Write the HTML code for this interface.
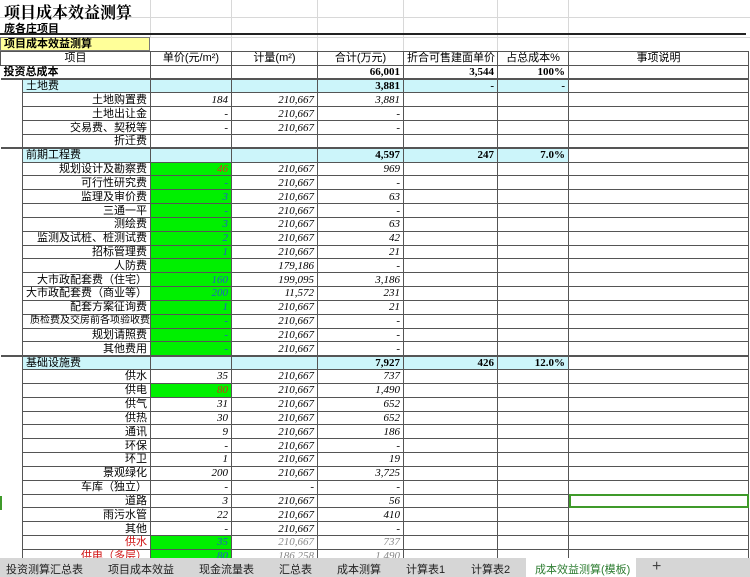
<!DOCTYPE html>
<html><head><meta charset="utf-8">
<style>
*{margin:0;padding:0;box-sizing:border-box}
body{width:750px;height:577px;overflow:hidden;background:#fff;position:relative;font-family:"Liberation Serif","Noto Serif CJK SC",serif;font-size:11px;color:#000}
.gl{position:absolute;background:#d8d8d8}
#t{position:absolute;left:0;top:51px;border-collapse:collapse;table-layout:fixed;width:748px}
#t td{height:13.83px;padding:0 3px;border:1px solid #555;white-space:nowrap;overflow:hidden;line-height:12px;font-size:11px}
#t td.a{border-top:none;border-bottom:none;border-left:none}
.l{text-align:right;font-family:"Liberation Sans","Noto Sans CJK SC",sans-serif}
.n{text-align:right;font-style:italic}
.c{text-align:center;font-family:"Liberation Sans","Noto Sans CJK SC",sans-serif}
.b{font-weight:bold;text-align:right}
.cy{background:#ccf5fa}
.g{background:#00f000;color:#2060c0;text-align:right;font-style:italic}
.sec td{border-top:2px solid #555!important}
.gr{color:#888}
.red{color:#d01010}
#tabs{position:absolute;left:0;top:558px;width:750px;height:19px;background:#d6d6d6;font-family:"Liberation Sans","Noto Sans CJK SC",sans-serif;font-size:11px;color:#222}
#tabs span{position:absolute;top:3px}
</style></head><body>
<div class="gl" style="left:231px;top:0;width:1px;height:51px"></div>
<div class="gl" style="left:317px;top:0;width:1px;height:51px"></div>
<div class="gl" style="left:403px;top:0;width:1px;height:51px"></div>
<div class="gl" style="left:497px;top:0;width:1px;height:51px"></div>
<div class="gl" style="left:568px;top:0;width:1px;height:51px"></div>
<div class="gl" style="left:150px;top:0;width:1px;height:37px"></div>
<div class="gl" style="left:0;top:17px;width:750px;height:1px"></div>
<div class="gl" style="left:0;top:37px;width:750px;height:1px"></div>
<div style="position:absolute;left:4px;top:0px;font-size:16px;font-weight:bold;font-family:'Liberation Serif','Noto Serif CJK SC',serif">项目成本效益测算</div>
<div style="position:absolute;left:4px;top:20px;font-size:11px;font-weight:bold;font-family:'Liberation Sans','Noto Sans CJK SC',sans-serif">庞各庄项目</div>
<div style="position:absolute;left:0;top:33px;width:746px;height:2px;background:#222"></div>
<div style="position:absolute;left:0;top:37px;width:150px;height:14px;background:#ffff99;border:1px solid #777;font-weight:bold;font-family:'Liberation Sans','Noto Sans CJK SC',sans-serif;font-size:11px;padding-left:3px;line-height:12px">项目成本效益测算</div>
<table id="t">
<colgroup><col style="width:22px"><col style="width:128px"><col style="width:81px"><col style="width:86px"><col style="width:86px"><col style="width:94px"><col style="width:71px"><col style="width:180px"></colgroup>
<tr><td colspan="2" class="c">项目</td><td class="c">单价(元/m²)</td><td class="c">计量(m²)</td><td class="c">合计(万元)</td><td class="c">折合可售建面单价</td><td class="c">占总成本%</td><td class="c">事项说明</td></tr>
<tr><td colspan="2" style="font-weight:bold;font-family:'Liberation Sans','Noto Sans CJK SC',sans-serif;border-left:none">投资总成本</td><td></td><td></td><td class="b">66,001</td><td class="b">3,544</td><td class="b">100%</td><td></td></tr>
<tr class="sec"><td class="a"></td><td class="cy" style="font-family:'Liberation Sans','Noto Sans CJK SC',sans-serif">土地费</td><td class="cy"></td><td class="cy"></td><td class="cy b">3,881</td><td class="cy b">-</td><td class="cy b">-</td><td></td></tr>
<tr><td class="a"></td><td class="l">土地购置费</td><td class="n">184</td><td class="n">210,667</td><td class="n">3,881</td><td></td><td></td><td></td></tr>
<tr><td class="a"></td><td class="l">土地出让金</td><td class="n">-</td><td class="n">210,667</td><td class="n">-</td><td></td><td></td><td></td></tr>
<tr><td class="a"></td><td class="l">交易费、契税等</td><td class="n">-</td><td class="n">210,667</td><td class="n">-</td><td></td><td></td><td></td></tr>
<tr><td class="a"></td><td class="l">折迁费</td><td></td><td></td><td></td><td></td><td></td><td></td></tr>
<tr class="sec"><td class="a"></td><td class="cy" style="font-family:'Liberation Sans','Noto Sans CJK SC',sans-serif">前期工程费</td><td class="cy"></td><td class="cy"></td><td class="cy b">4,597</td><td class="cy b">247</td><td class="cy b">7.0%</td><td></td></tr>
<tr><td class="a"></td><td class="l">规划设计及勘察费</td><td class="g" style="color:#e03020">46</td><td class="n">210,667</td><td class="n">969</td><td></td><td></td><td></td></tr>
<tr><td class="a"></td><td class="l">可行性研究费</td><td class="g">-</td><td class="n">210,667</td><td class="n">-</td><td></td><td></td><td></td></tr>
<tr><td class="a"></td><td class="l">监理及审价费</td><td class="g">3</td><td class="n">210,667</td><td class="n">63</td><td></td><td></td><td></td></tr>
<tr><td class="a"></td><td class="l">三通一平</td><td class="g">-</td><td class="n">210,667</td><td class="n">-</td><td></td><td></td><td></td></tr>
<tr><td class="a"></td><td class="l">测绘费</td><td class="g">3</td><td class="n">210,667</td><td class="n">63</td><td></td><td></td><td></td></tr>
<tr><td class="a"></td><td class="l">监测及试桩、桩测试费</td><td class="g">2</td><td class="n">210,667</td><td class="n">42</td><td></td><td></td><td></td></tr>
<tr><td class="a"></td><td class="l">招标管理费</td><td class="g">1</td><td class="n">210,667</td><td class="n">21</td><td></td><td></td><td></td></tr>
<tr><td class="a"></td><td class="l">人防费</td><td class="g"></td><td class="n">179,186</td><td class="n">-</td><td></td><td></td><td></td></tr>
<tr><td class="a"></td><td class="l">大市政配套费（住宅）</td><td class="g">160</td><td class="n">199,095</td><td class="n">3,186</td><td></td><td></td><td></td></tr>
<tr><td class="a"></td><td class="l">大市政配套费（商业等）</td><td class="g">200</td><td class="n">11,572</td><td class="n">231</td><td></td><td></td><td></td></tr>
<tr><td class="a"></td><td class="l">配套方案征询费</td><td class="g">1</td><td class="n">210,667</td><td class="n">21</td><td></td><td></td><td></td></tr>
<tr><td class="a"></td><td class="l" style="padding:0;font-size:10px">质检费及交房前各项验收费</td><td class="g">-</td><td class="n">210,667</td><td class="n">-</td><td></td><td></td><td></td></tr>
<tr><td class="a"></td><td class="l">规划请照费</td><td class="g">-</td><td class="n">210,667</td><td class="n">-</td><td></td><td></td><td></td></tr>
<tr><td class="a"></td><td class="l">其他费用</td><td class="g">-</td><td class="n">210,667</td><td class="n">-</td><td></td><td></td><td></td></tr>
<tr class="sec"><td class="a"></td><td class="cy" style="font-family:'Liberation Sans','Noto Sans CJK SC',sans-serif">基础设施费</td><td class="cy"></td><td class="cy"></td><td class="cy b">7,927</td><td class="cy b">426</td><td class="cy b">12.0%</td><td></td></tr>
<tr><td class="a"></td><td class="l">供水</td><td class="n">35</td><td class="n">210,667</td><td class="n">737</td><td></td><td></td><td></td></tr>
<tr><td class="a"></td><td class="l">供电</td><td class="g" style="color:#c04010">80</td><td class="n">210,667</td><td class="n">1,490</td><td></td><td></td><td></td></tr>
<tr><td class="a"></td><td class="l">供气</td><td class="n">31</td><td class="n">210,667</td><td class="n">652</td><td></td><td></td><td></td></tr>
<tr><td class="a"></td><td class="l">供热</td><td class="n">30</td><td class="n">210,667</td><td class="n">652</td><td></td><td></td><td></td></tr>
<tr><td class="a"></td><td class="l">通讯</td><td class="n">9</td><td class="n">210,667</td><td class="n">186</td><td></td><td></td><td></td></tr>
<tr><td class="a"></td><td class="l">环保</td><td class="n">-</td><td class="n">210,667</td><td class="n">-</td><td></td><td></td><td></td></tr>
<tr><td class="a"></td><td class="l">环卫</td><td class="n">1</td><td class="n">210,667</td><td class="n">19</td><td></td><td></td><td></td></tr>
<tr><td class="a"></td><td class="l">景观绿化</td><td class="n">200</td><td class="n">210,667</td><td class="n">3,725</td><td></td><td></td><td></td></tr>
<tr><td class="a"></td><td class="l">车库（独立）</td><td class="n">-</td><td class="n">-</td><td class="n">-</td><td></td><td></td><td></td></tr>
<tr><td class="a"></td><td class="l">道路</td><td class="n">3</td><td class="n">210,667</td><td class="n">56</td><td></td><td></td><td style="outline:2px solid #3f9a2a;outline-offset:-2px"></td></tr>
<tr><td class="a"></td><td class="l">雨污水管</td><td class="n">22</td><td class="n">210,667</td><td class="n">410</td><td></td><td></td><td></td></tr>
<tr><td class="a"></td><td class="l">其他</td><td class="n">-</td><td class="n">210,667</td><td class="n">-</td><td></td><td></td><td></td></tr>
<tr><td class="a"></td><td class="l red">供水</td><td class="g">35</td><td class="n gr">210,667</td><td class="n gr">737</td><td></td><td></td><td></td></tr>
<tr><td class="a"></td><td class="l red">供电（多层）</td><td class="g">80</td><td class="n gr">186,258</td><td class="n gr">1,490</td><td></td><td></td><td></td></tr>
</table>
<div style="position:absolute;left:0;top:496px;width:2px;height:14px;background:#3f9a2a"></div>
<div id="tabs">
<span style="left:6px">投资测算汇总表</span>
<span style="left:108px">项目成本效益</span>
<span style="left:199px">现金流量表</span>
<span style="left:279px">汇总表</span>
<span style="left:337px">成本测算</span>
<span style="left:406px">计算表1</span>
<span style="left:471px">计算表2</span>
<div style="position:absolute;left:526px;top:0;width:110px;height:19px;background:#fff"></div>
<span style="left:535px;color:#2e7d32">成本效益测算(模板)</span>
<span style="left:652px;top:0;font-size:16px;color:#444">+</span>
</div>
</body></html>
